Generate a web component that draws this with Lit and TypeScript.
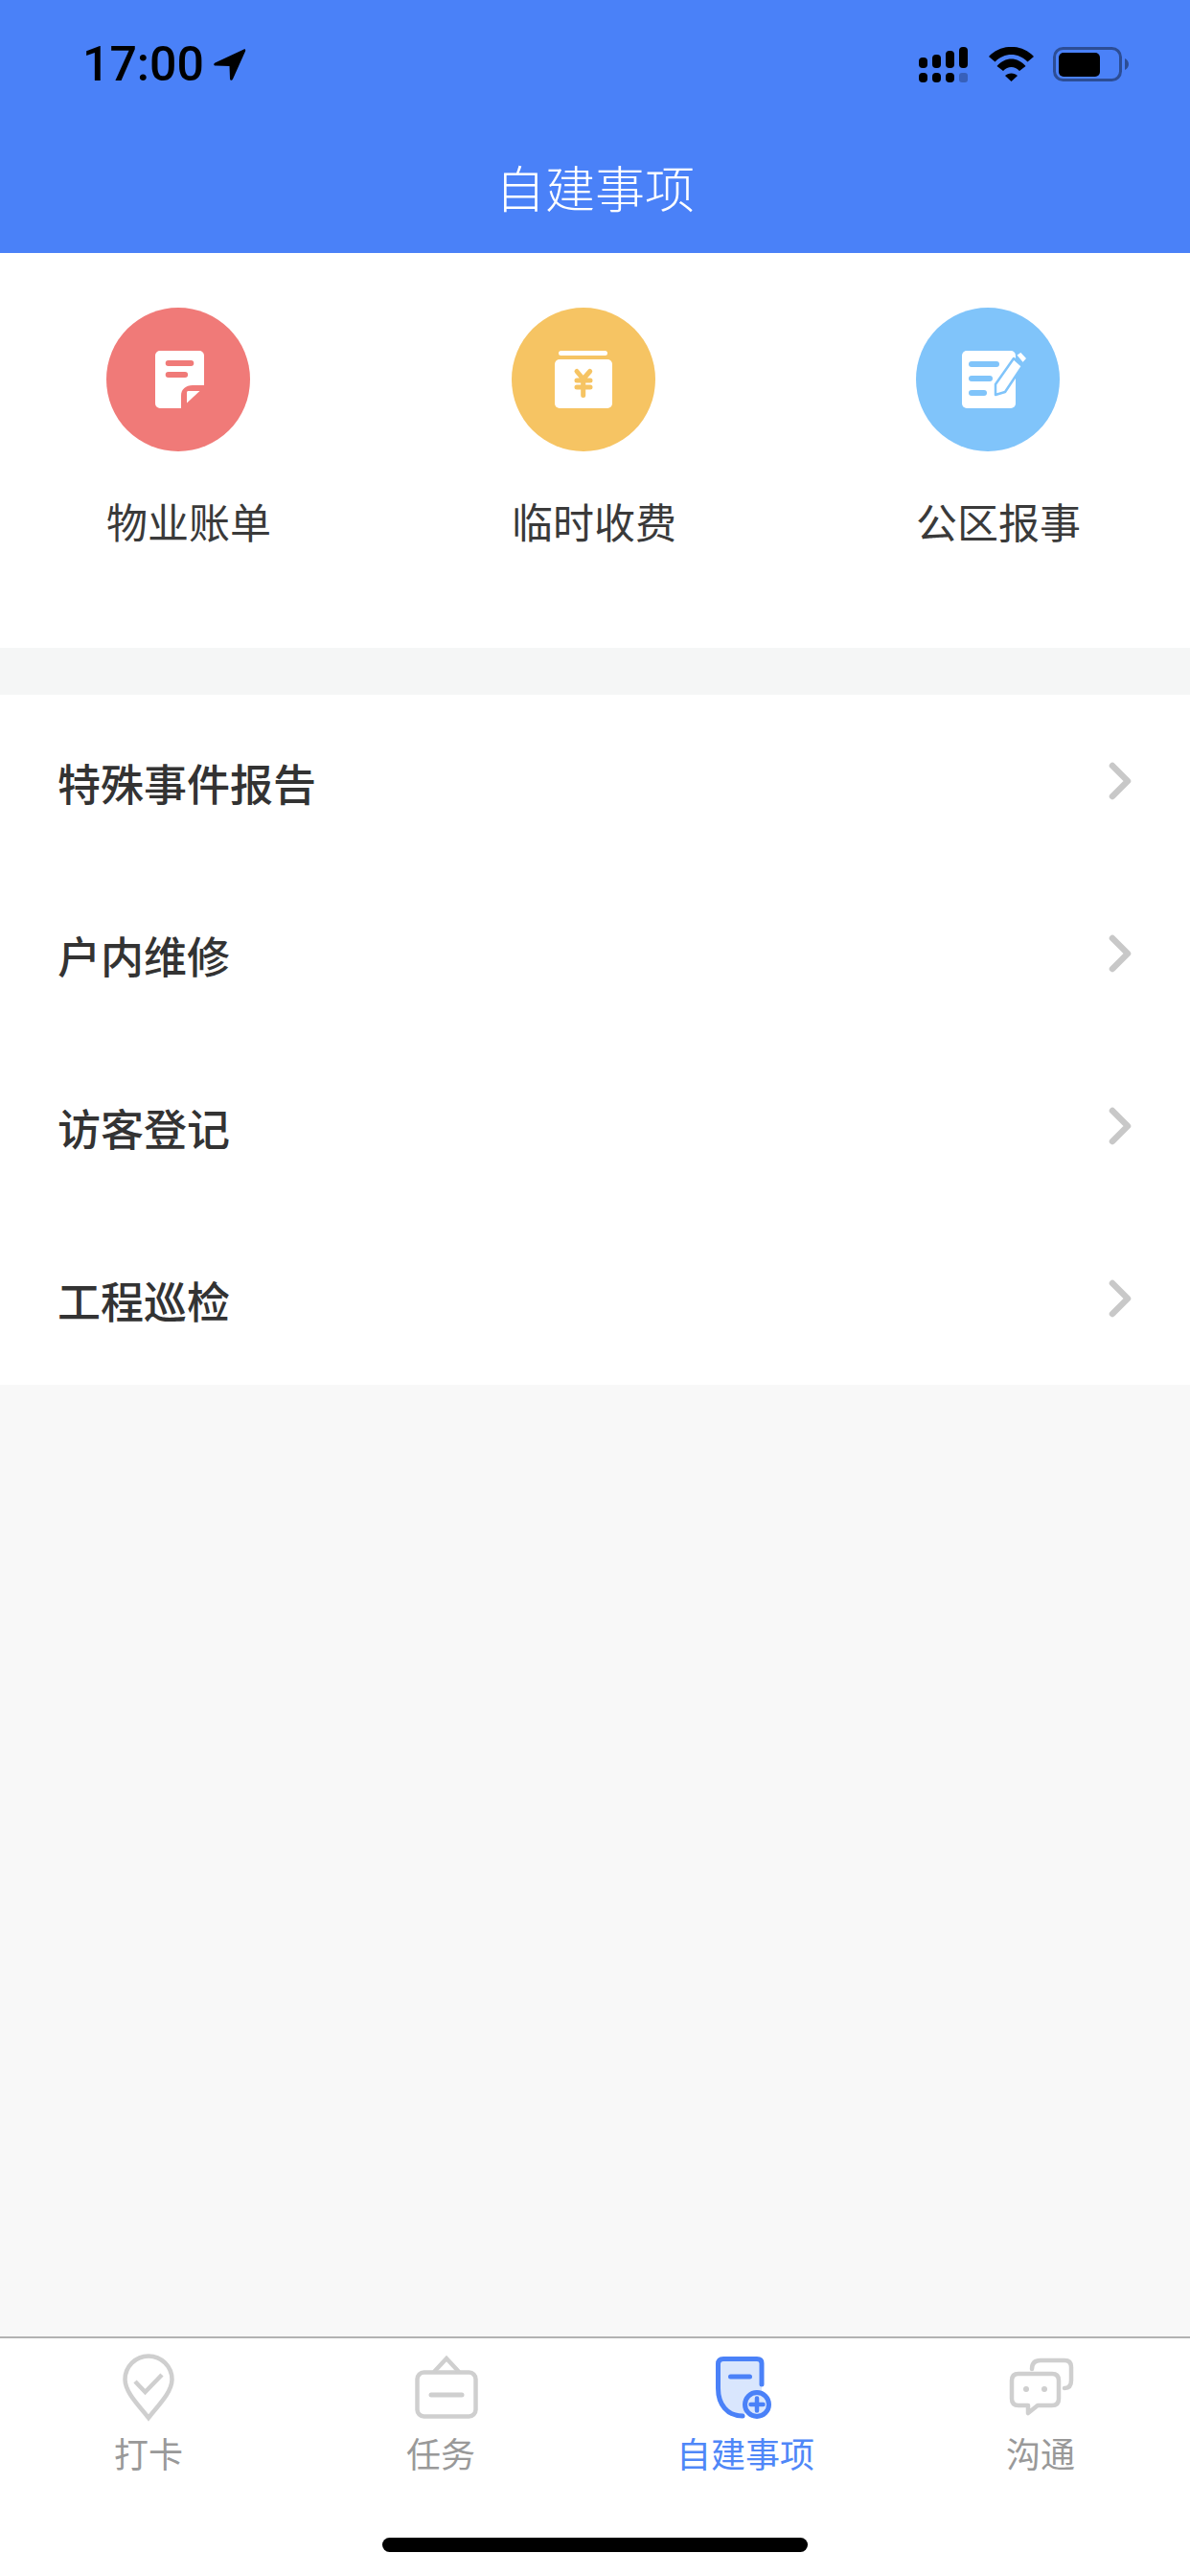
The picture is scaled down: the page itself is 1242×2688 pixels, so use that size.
import { LitElement, html, css, svg } from "lit";
import { customElement } from "lit/decorators.js";

const billIcon = svg`
  <path fill="#fff" d="M56 45H97a5 5 0 0 1 5 5V81H90C83 81 78 85 78 92V105H56a5 5 0 0 1-5-5V50a5 5 0 0 1 5-5Z"/>
  <path fill="#fff" d="M85 87H97.5L84 99.5V88Z"/>
  <rect x="61.7" y="55" width="29.6" height="6" rx="3" fill="#f07a78"/>
  <rect x="61.7" y="67" width="23.4" height="6" rx="3" fill="#f07a78"/>`;

const feeIcon = svg`
  <rect x="49" y="45" width="51" height="5" rx="2.5" fill="#fff"/>
  <rect x="45" y="54" width="60" height="51" rx="5" fill="#fff"/>
  <path fill="none" stroke="#f6c463" stroke-width="5" stroke-linecap="round" stroke-linejoin="round"
    d="M68 66.5L74.7 74.5L81.7 66.5M74.7 74.5V91.5M68 76H82M68 83H82"/>`;

const reportIcon = svg`
  <rect x="48" y="45" width="56" height="60" rx="5" fill="#fff"/>
  <rect x="55" y="56" width="32" height="6" rx="3" fill="#80c4fa"/>
  <rect x="55" y="71" width="25" height="6" rx="3" fill="#80c4fa"/>
  <rect x="55" y="86" width="19" height="6" rx="3" fill="#80c4fa"/>
  <path fill="#fff" stroke="#80c4fa" stroke-width="2.5" stroke-linejoin="round"
    d="M83 80L102 53L111 61L93 88L83 91Z"/>
  <path fill="#fff" stroke="#80c4fa" stroke-width="1.5" stroke-linejoin="round"
    d="M104.5 49.5L109.5 46L116 53L111.5 58Z"/>`;

const pinIcon = svg`
  <path fill="none" stroke="#cfcfcf" stroke-width="4.5"
    d="M40 71C32 60 15.500 45 15.500 31C15.500 17.500 26.500 6.500 40 6.500C53.500 6.500 64.500 17.500 64.500 31C64.500 45 48 60 40 71Z"/>
  <path fill="none" stroke="#cfcfcf" stroke-width="4.5" d="M26 33L36.500 44L54 26"/>`;

const taskIcon = svg`
  <g fill="none" stroke="#cfcfcf" stroke-width="4.5">
    <rect x="15.500" y="23.500" width="61" height="46" rx="7"/>
    <path d="M33 23L46 9L59 23"/>
  </g>
  <path d="M30 47H62" stroke="#cfcfcf" stroke-width="5" stroke-linecap="round"/>`;

const newIcon = svg`
  <path fill="#d9e6fd" d="M57 50V14Q57 9.500 52 9.500H17Q11.500 9.500 11.500 15V40C11.500 57 21 69 37 69Z"/>
  <path fill="none" stroke="#4a81f8" stroke-width="5" stroke-linecap="round"
    d="M57 36V14Q57 9.500 52 9.500H17Q11.500 9.500 11.500 15V40C11.500 57 21 69 37 69"/>
  <path d="M24.500 28H44.500" stroke="#4a81f8" stroke-width="5" stroke-linecap="round"/>
  <circle cx="52" cy="57" r="12.500" fill="#d9e6fd" stroke="#4a81f8" stroke-width="5"/>
  <path d="M52 50.500V63.500M45.500 57H58.500" stroke="#4a81f8" stroke-width="4.500" stroke-linecap="round"/>`;

const chatIcon = svg`
  <g fill="none" stroke="#cfcfcf" stroke-width="4.500" stroke-linejoin="round" stroke-linecap="round">
    <path d="M17 25H52Q59 25 59 32V51Q59 58 52 58H37L27 66V58H17Q10 58 10 51V32Q10 25 17 25Z"/>
    <path d="M31 20Q31 11 40 11H65Q72 11 72 18V32Q72 40 65 40"/>
  </g>
  <circle cx="25" cy="41" r="3" fill="#cfcfcf"/>
  <circle cx="44" cy="41" r="3" fill="#cfcfcf"/>`;

const shortcuts = [
  { label: "物业账单", bg: "red", icon: billIcon },
  { label: "临时收费", bg: "yellow", icon: feeIcon },
  { label: "公区报事", bg: "blue", icon: reportIcon },
];
const rows = ["特殊事件报告", "户内维修", "访客登记", "工程巡检"];
const tabs = [
  { label: "打卡", icon: pinIcon, active: false },
  { label: "任务", icon: taskIcon, active: false },
  { label: "自建事项", icon: newIcon, active: true },
  { label: "沟通", icon: chatIcon, active: false },
];

@customElement("app-root")
export class AppRoot extends LitElement {
  static styles = css`
    :host {
      display: flex;
      flex-direction: column;
      width: 1242px;
      height: 2688px;
      background: #f8f8f8;
      font-family: "Noto Sans CJK SC", "Noto Sans", sans-serif;
    }
    * { box-sizing: border-box; }
    svg { display: block; flex: none; }
    .header {
      height: 264px;
      background: #4a81f8;
      display: flex;
      flex-direction: column;
      flex: none;
    }
    .status {
      display: flex;
      align-items: flex-start;
      height: 36px;
      margin-top: 49px;
      padding: 0 64px 0 86px;
    }
    .time {
      font-family: Roboto, sans-serif;
      font-weight: 500;
      font-size: 50px;
      line-height: 36px;
      color: #000;
      width: 137px;
    }
    .arrow { margin-top: 2px; }
    .status-right {
      margin-left: auto;
      display: flex;
      align-items: flex-start;
    }
    .wifi { margin-left: 22px; }
    .battery { margin-left: 20px; }
    .title {
      margin-top: 74px;
      text-align: center;
      color: #fff;
      font-size: 52px;
      line-height: 72px;
      font-weight: 300;
    }
    .shortcuts {
      flex: none;
      height: 412px;
      background: #fff;
      padding: 57px 0 0 111px;
      display: grid;
      grid-template-columns: 423px 422px 280px;
      align-items: start;
    }
    .shortcut {
      display: flex;
      flex-direction: column;
      align-items: flex-start;
    }
    .circle { width: 150px; height: 150px; border-radius: 50%; }
    .red { background: #f07a78; }
    .yellow { background: #f6c463; }
    .blue { background: #80c4fa; }
    .shortcut-label {
      margin-top: 42px;
      font-size: 43px;
      line-height: 60px;
      color: #3a3a3a;
      white-space: nowrap;
      font-weight: 400;
    }
    .gap { flex: none; height: 49px; background: #f5f6f6; }
    .list { flex: none; background: #fff; }
    .row {
      height: 180px;
      padding: 0 60px;
      display: flex;
      align-items: center;
      justify-content: space-between;
    }
    .row-label {
      font-size: 45px;
      line-height: 60px;
      font-weight: 500;
      color: #333;
      padding-top: 4px;
    }
    .spacer { flex: 1; }
    .tabbar {
      flex: none;
      height: 250px;
      background: #fff;
      border-top: 2px solid #b2b2b2;
      display: flex;
      flex-direction: column;
    }
    .tabs {
      display: grid;
      grid-template-columns: 310px 300px 336px 280px;
      padding-top: 12px;
    }
    .tab {
      display: flex;
      flex-direction: column;
      align-items: center;
    }
    .tab-label {
      margin-top: 7px;
      font-size: 36px;
      line-height: 40px;
      color: #999;
      white-space: nowrap;
    }
    .tab.active .tab-label { color: #4f87f8; }
    .home {
      width: 444px;
      height: 15px;
      border-radius: 8px;
      background: #000;
      margin: 69px auto 0;
    }
  `;

  render() {
    return html`
      <div class="header">
        <div class="status">
          <span class="time">17:00</span>
          <svg class="arrow" width="34" height="34" viewBox="0 0 34 34">
            <path fill="#000" d="M31.500 .5C33 0 33.500 1 33 2.500L20 31.500C19 33.500 17 33 17 31L16.500 18L2 17.500C0 17.500-.5 15.500 1.500 14.500Z"/>
          </svg>
          <div class="status-right">
            <svg width="51" height="37" viewBox="0 0 51 37">
              <rect x="0" y="11" width="9" height="11" rx="4"/>
              <rect x="14" y="8" width="9" height="14" rx="4"/>
              <rect x="28" y="4" width="9" height="18" rx="4"/>
              <rect x="42" y="0" width="9" height="22" rx="4"/>
              <rect x="0" y="27" width="9" height="10" rx="4"/>
              <rect x="14" y="27" width="9" height="10" rx="4"/>
              <rect x="28" y="27" width="9" height="10" rx="4"/>
              <rect x="42" y="27" width="9" height="10" rx="3" opacity=".25"/>
            </svg>
            <svg class="wifi" width="47" height="36" viewBox="0 0 47 36">
              <path d="M0 10C13-3.500 34-3.500 47 10L40.500 15.500C31 5.500 16 5.500 6.500 15.500Z"/>
              <path d="M8.500 20C17 10 30 10 38.500 20L32 25C27 19.500 20 19.500 15 25Z"/>
              <path d="M17 30C20 26.500 27 26.500 30 30L23.500 36Z"/>
            </svg>
            <svg class="battery" width="79" height="36" viewBox="0 0 79 36">
              <rect x="1.500" y="1.500" width="69" height="33" rx="9" fill="none" stroke="#000" stroke-opacity=".4" stroke-width="3"/>
              <rect x="6" y="6" width="43" height="25" rx="5"/>
              <path d="M75 12C77.500 13 79 15.500 79 18C79 20.500 77.500 23 75 24Z" opacity=".4"/>
            </svg>
          </div>
        </div>
        <div class="title">自建事项</div>
      </div>

      <div class="shortcuts">
        ${shortcuts.map(
          (s) => html`
            <div class="shortcut">
              <div class="circle ${s.bg}">
                <svg width="150" height="150" viewBox="0 0 150 150">${s.icon}</svg>
              </div>
              <div class="shortcut-label">${s.label}</div>
            </div>
          `
        )}
      </div>

      <div class="gap"></div>

      <div class="list">
        ${rows.map(
          (r) => html`
            <div class="row">
              <span class="row-label">${r}</span>
              <svg width="26" height="42" viewBox="0 0 26 42">
                <path d="M5 5L21 21L5 37" fill="none" stroke="#c8c8c8" stroke-width="6.500" stroke-linecap="round" stroke-linejoin="round"/>
              </svg>
            </div>
          `
        )}
      </div>

      <div class="spacer"></div>

      <div class="tabbar">
        <div class="tabs">
          ${tabs.map(
            (t) => html`
              <div class="tab ${t.active ? "active" : ""}">
                <svg width="80" height="80" viewBox="0 0 80 80">${t.icon}</svg>
                <span class="tab-label">${t.label}</span>
              </div>
            `
          )}
        </div>
        <div class="home"></div>
      </div>
    `;
  }
}
